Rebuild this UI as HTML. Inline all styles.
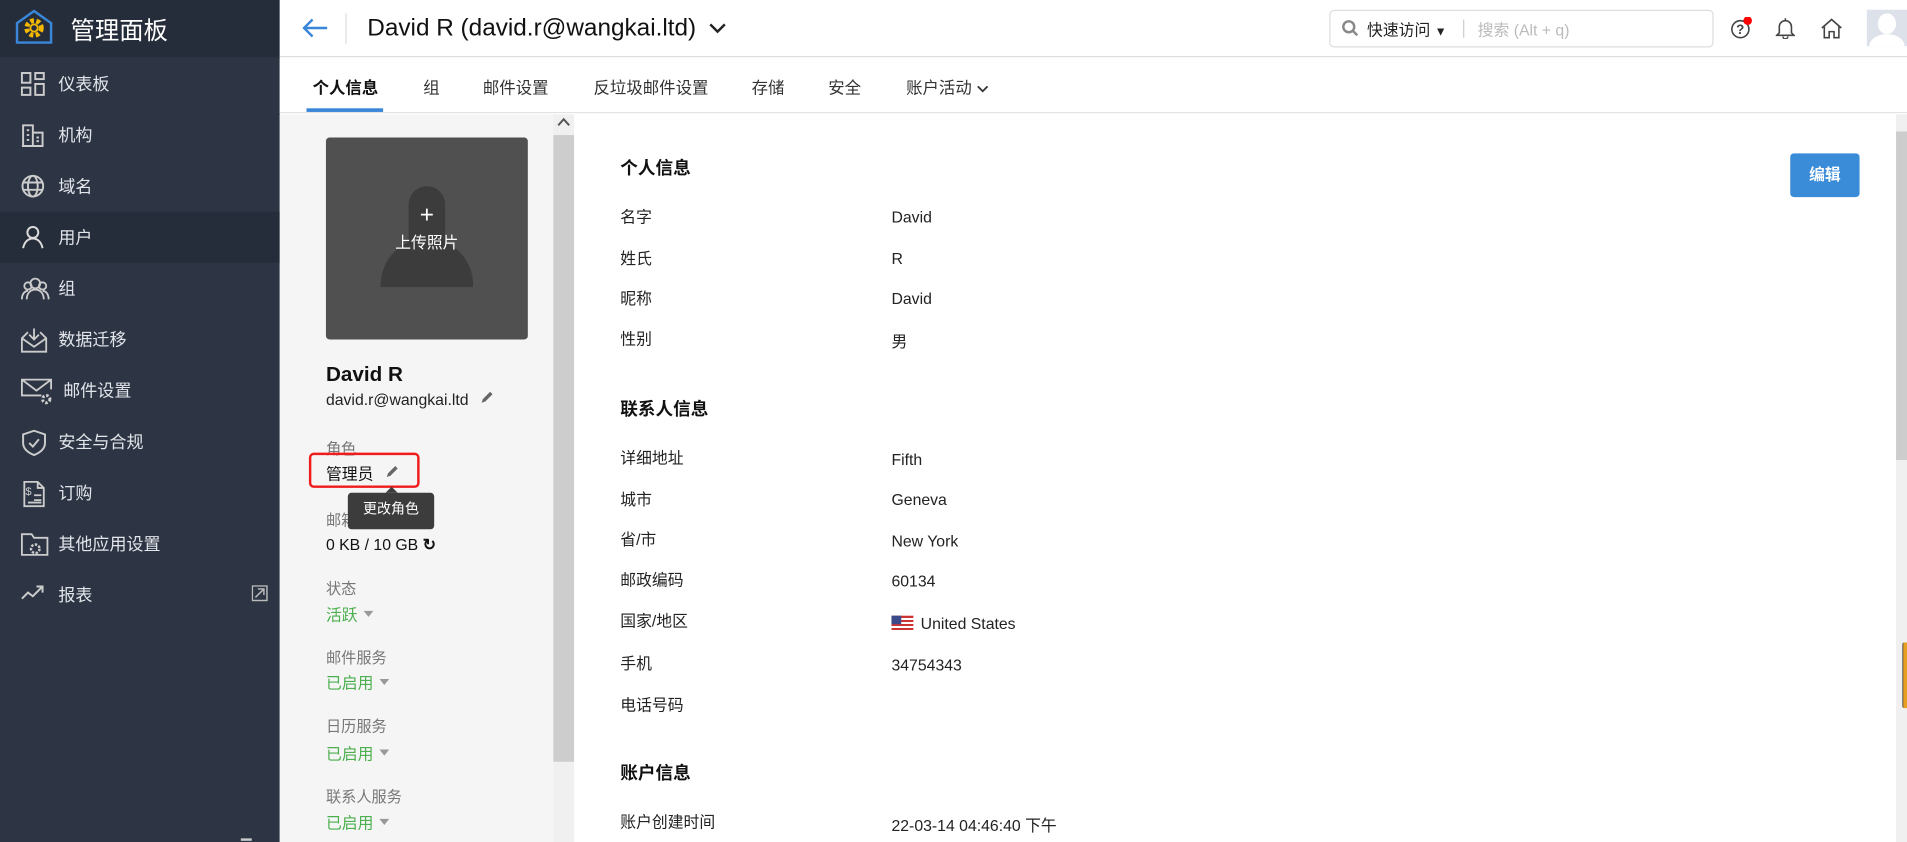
<!DOCTYPE html>
<html><head><meta charset="utf-8"><style>
*{box-sizing:border-box;margin:0;padding:0}
html,body{width:1907px;height:842px;overflow:hidden;background:#fff}
#w{width:1568px;height:692px;transform:scale(1.2162,1.2168);transform-origin:0 0;position:relative;font-family:"Liberation Sans","Noto Sans CJK SC",sans-serif;color:#222}
.abs{position:absolute}
#side{left:0;top:0;width:230px;height:692px;background:#2d3544}
#logo{left:0;top:0;width:230px;height:47px;background:#262d3a}
.nav{position:absolute;left:0;width:230px;height:42px;color:#e2e5ea;font-size:14px;line-height:42px;padding-left:48px}
.nav svg{position:absolute;left:17px;top:11px}
.nav.act{background:#262d3a}
#top{left:230px;top:0;width:1338px;height:47px;border-bottom:1px solid #ddd;background:#fff}
#tabs{left:230px;top:48px;width:1338px;height:45px;border-bottom:1px solid #e3e3e3;background:#fff}
.tab{position:absolute;top:13px;font-size:13.5px;color:#333}
#lp{left:230px;top:94px;width:242px;height:598px;background:#f5f5f5}
.lbl{position:absolute;left:268px;font-size:12.5px;color:#777}
.grn{position:absolute;left:268px;font-size:13px;color:#4caf50}
.grn i{display:inline-block;border:4px solid transparent;border-top:5px solid #999;margin-left:5px;vertical-align:-1px}
.rk{position:absolute;left:510px;font-size:13px;color:#222;margin-top:-2px}
.rv{position:absolute;left:733px;font-size:13px;color:#222}
.h{position:absolute;left:510px;font-size:14.5px;font-weight:bold;color:#111}
</style></head><body><div id="w">
<div id="side" class="abs"></div>
<div id="logo" class="abs">
<svg class="abs" style="left:12px;top:7px" width="32" height="30" viewBox="0 0 32 30"><path d="M2 12 L16 2 L30 12 V28 H2 Z" fill="none" stroke="#3a86d8" stroke-width="2"/><circle cx="16" cy="16" r="6" fill="none" stroke="#f5b800" stroke-width="4" stroke-dasharray="3 2"/><circle cx="16" cy="16" r="3" fill="#262d3a" stroke="#f5b800" stroke-width="1.5"/></svg>
<div class="abs" style="left:58px;top:9px;font-size:20px;color:#fff">管理面板</div></div>
<div class="nav" style="top:48px"><svg width="20" height="20" fill="none" stroke="#ccc" stroke-width="1.6"><rect x="1" y="1" width="7" height="8"/><rect x="12" y="1" width="7" height="5"/><rect x="1" y="13" width="7" height="6"/><rect x="12" y="10" width="7" height="9"/></svg>仪表板</div>
<div class="nav" style="top:90px"><svg width="20" height="20" fill="none" stroke="#ccc" stroke-width="1.6"><path d="M2 19V2h8v17M10 8h8v11H1M5 6h2M5 10h2M5 14h2M13 12h2M13 15h2"/></svg>机构</div>
<div class="nav" style="top:132px"><svg width="20" height="20" fill="none" stroke="#ccc" stroke-width="1.6"><circle cx="10" cy="10" r="8.5"/><ellipse cx="10" cy="10" rx="4" ry="8.5"/><path d="M2 7h16M2 13h16"/></svg>域名</div>
<div class="nav act" style="top:174px"><svg width="20" height="20" fill="none" stroke="#ddd" stroke-width="1.6"><circle cx="10" cy="6" r="4.5"/><path d="M2 19c1-5 4-8 8-8s7 3 8 8"/></svg>用户</div>
<div class="nav" style="top:216px"><svg width="24" height="20" fill="none" stroke="#ccc" stroke-width="1.5"><circle cx="12" cy="6" r="4"/><circle cx="6" cy="8" r="3"/><circle cx="18" cy="8" r="3"/><path d="M1 19c0-5 3-7 5-7M23 19c0-5-3-7-5-7M5 19c0-5 3-8 7-8s7 3 7 8"/></svg>组</div>
<div class="nav" style="top:258px"><svg width="22" height="22" fill="none" stroke="#ccc" stroke-width="1.5"><path d="M11 1v9M7 6l4 4 4-4M6 4L1 9v11h20V9l-5-5M1 9l10 7 10-7"/></svg>数据迁移</div>
<div class="nav" style="top:300px;padding-left:52px"><svg width="26" height="22" fill="none" stroke="#ccc" stroke-width="1.5"><path d="M17 14H1V1h24v8M1 1l12 9 12-9"/><circle cx="21" cy="17" r="3" stroke-width="2.5" stroke-dasharray="2 1.5"/></svg>邮件设置</div>
<div class="nav" style="top:342px"><svg width="22" height="22" fill="none" stroke="#ccc" stroke-width="1.6"><path d="M11 1l9 3v7c0 5-4 8-9 10-5-2-9-5-9-10V4z"/><path d="M7 11l3 3 5-6"/></svg>安全与合规</div>
<div class="nav" style="top:384px"><svg width="22" height="22" fill="none" stroke="#ccc" stroke-width="1.5"><path d="M3 1h11l5 5v15H3zM14 1v5h5M11 12h6M11 16h6M6 18h11"/><text x="4" y="12" font-size="9" fill="#ccc" stroke="none">$</text></svg>订购</div>
<div class="nav" style="top:426px"><svg width="24" height="22" fill="none" stroke="#ccc" stroke-width="1.5"><path d="M1 19V2h8l2 3h11v14z"/><circle cx="12" cy="14" r="3.5" stroke-dasharray="2 1.2" stroke-width="2"/></svg>其他应用设置</div>
<div class="nav" style="top:468px"><svg width="24" height="18" fill="none" stroke="#ccc" stroke-width="1.6"><path d="M1 13l5-5 4 3 8-8M13 3h5v5"/></svg>报表<svg style="left:207px;top:13px" width="14" height="14" fill="none" stroke="#bbb" stroke-width="1.2"><rect x=".5" y=".5" width="12" height="12"/><path d="M3 10l7-7M5 3h5v5"/></svg></div>
<div id="top" class="abs">
<svg class="abs" style="left:18px;top:14px" width="22" height="18" fill="none" stroke="#3a86d8" stroke-width="2"><path d="M21 9H2M9 2L2 9l7 7"/></svg>
<div class="abs" style="left:54px;top:11px;width:1px;height:25px;background:#ddd"></div>
<div class="abs" style="left:72px;top:12px;font-size:20px;color:#111">David R (david.r@wangkai.ltd) <svg width="16" height="12" style="margin-left:4px" fill="none" stroke="#222" stroke-width="2"><path d="M2 3l6 6 6-6"/></svg></div>
<div class="abs" style="left:863px;top:8px;width:316px;height:31px;border:1px solid #ddd;border-radius:4px"><svg class="abs" style="left:9px;top:7px" width="14" height="14" fill="none" stroke="#888" stroke-width="2"><circle cx="6" cy="6" r="4.5"/><path d="M9.5 9.5L13 13"/></svg><div class="abs" style="left:30px;top:5px;font-size:13px;color:#222">快速访问 <span style="font-size:10px">▼</span></div><div class="abs" style="left:109px;top:7px;width:1px;height:15px;background:#ccc"></div><div class="abs" style="left:121px;top:5px;font-size:13px;color:#bbb">搜索 (Alt + q)</div></div>
<svg class="abs" style="left:1192px;top:14px" width="20" height="20" fill="none" stroke="#444" stroke-width="1.3"><circle cx="9" cy="10" r="7"/><text x="5.5" y="14" font-size="11" font-weight="bold" fill="#444" stroke="none">?</text><circle cx="15" cy="3" r="3.5" fill="red" stroke="none"/></svg>
<svg class="abs" style="left:1230px;top:14px" width="16" height="18" fill="none" stroke="#444" stroke-width="1.3"><path d="M3 13V8a5 5 0 0 1 10 0v5l2 2H1zM6 16a2 2 0 0 0 4 0M8 1v2"/></svg>
<svg class="abs" style="left:1267px;top:14px" width="18" height="18" fill="none" stroke="#444" stroke-width="1.3"><path d="M1 9l8-7 8 7M3 7v10h4v-5h4v5h4V7"/></svg>
<div class="abs" style="left:1305px;top:8px;width:33px;height:30px;background:#dde1ea;overflow:hidden"><div class="abs" style="left:9px;top:3px;width:15px;height:17px;border-radius:50%;background:#fff"></div><div class="abs" style="left:2px;top:20px;width:29px;height:20px;border-radius:50% 50% 0 0;background:#fff"></div></div>
</div>
<div id="tabs" class="abs">
<div class="tab" style="left:27px;font-weight:bold;color:#111">个人信息</div><div class="abs" style="left:22px;top:41px;width:63px;height:3px;background:#3a86d8"></div>
<div class="tab" style="left:118px">组</div><div class="tab" style="left:167px">邮件设置</div><div class="tab" style="left:258px">反垃圾邮件设置</div><div class="tab" style="left:388px">存储</div><div class="tab" style="left:451px">安全</div><div class="tab" style="left:515px">账户活动 <svg width="10" height="8" fill="none" stroke="#333" stroke-width="1.5"><path d="M1 2l4 4 4-4"/></svg></div>
</div>
<div id="lp" class="abs"></div>
<div class="abs" style="left:455px;top:94px;width:17px;height:598px;background:#f0f0f0"></div>
<div class="abs" style="left:455px;top:111px;width:17px;height:515px;background:#cdcdcd"></div>
<svg class="abs" style="left:458px;top:96px" width="11" height="8" fill="none" stroke="#555" stroke-width="1.6"><path d="M1 7l4.5-5 4.5 5"/></svg>
<div class="abs" style="left:268px;top:113px;width:166px;height:166px;background:#505050;border-radius:3px;overflow:hidden">
<div class="abs" style="left:68px;top:40px;width:30px;height:65px;border-radius:15px;background:#3c3c3c"></div>
<div class="abs" style="left:45px;top:83px;width:76px;height:40px;border-radius:38px 38px 0 0;background:#3c3c3c"></div>
<div class="abs" style="left:0;top:54px;width:166px;text-align:center;color:#fff;font-size:20px;line-height:20px">+</div>
<div class="abs" style="left:0;top:76px;width:166px;text-align:center;color:#fff;font-size:13px">上传照片</div></div>
<div class="abs" style="left:268px;top:298px;font-size:17px;font-weight:bold;color:#111">David R</div>
<div class="abs" style="left:268px;top:321px;font-size:13px;color:#222">david.r@wangkai.ltd <svg width="12" height="12" style="margin-left:5px"><path d="M2 10l1-3 6-6 2 2-6 6z" fill="#666"/></svg></div>
<div class="lbl" style="top:358px">角色</div>
<div class="abs" style="left:268px;top:379px;font-size:13px;color:#111">管理员 <svg width="12" height="12" style="margin-left:5px"><path d="M2 10l1-3 6-6 2 2-6 6z" fill="#666"/></svg></div>
<div class="abs" style="left:254px;top:372px;width:91px;height:29px;border:2px solid #f01c1c;border-radius:4px"></div>
<div class="lbl" style="top:417px">邮箱</div>
<div class="abs" style="left:286px;top:405px;width:71px;height:30px;background:#3c3c3c;border-radius:3px;color:#fff;font-size:11.5px;text-align:center;line-height:28px">更改角色</div>
<div class="abs" style="left:317px;top:400px;border:5px solid transparent;border-bottom-color:#3c3c3c;border-top:0"></div>
<div class="abs" style="left:268px;top:440px;font-size:13px;color:#111">0 KB / 10 GB <span style="font-weight:bold">↻</span></div>
<div class="lbl" style="top:473px">状态</div><div class="grn" style="top:495px">活跃<i></i></div>
<div class="lbl" style="top:530px">邮件服务</div><div class="grn" style="top:551px">已启用<i></i></div>
<div class="lbl" style="top:586px">日历服务</div><div class="grn" style="top:609px">已启用<i></i></div>
<div class="lbl" style="top:644px">联系人服务</div><div class="grn" style="top:666px">已启用<i></i></div>
<div class="abs" style="left:198px;top:689px;width:9px;height:2px;background:#ccc"></div>
<div class="h" style="top:127px">个人信息</div>
<div class="abs" style="left:1472px;top:126px;width:57px;height:36px;background:#3a8cd8;border-radius:3px;color:#fff;font-size:13px;font-weight:bold;text-align:center;line-height:36px">编辑</div>
<div class="rk" style="top:170px">名字</div><div class="rv" style="top:171px">David</div>
<div class="rk" style="top:204px">姓氏</div><div class="rv" style="top:205px">R</div>
<div class="rk" style="top:237px">昵称</div><div class="rv" style="top:238px">David</div>
<div class="rk" style="top:270px">性别</div><div class="rv" style="top:270px">男</div>
<div class="h" style="top:325px">联系人信息</div>
<div class="rk" style="top:368px">详细地址</div><div class="rv" style="top:370px">Fifth</div>
<div class="rk" style="top:402px">城市</div><div class="rv" style="top:403px">Geneva</div>
<div class="rk" style="top:435px">省/市</div><div class="rv" style="top:437px">New York</div>
<div class="rk" style="top:468px">邮政编码</div><div class="rv" style="top:470px">60134</div>
<div class="rk" style="top:502px">国家/地区</div><div class="rv" style="top:505px"><span style="display:inline-block;width:18px;height:12px;vertical-align:-1px;margin-right:6px;background:repeating-linear-gradient(#c33 0 1.7px,#fff 1.7px 3.4px);position:relative"><span style="position:absolute;left:0;top:0;width:8px;height:7px;background:#3c4a8a"></span></span>United States</div>
<div class="rk" style="top:537px">手机</div><div class="rv" style="top:539px">34754343</div>
<div class="rk" style="top:571px">电话号码</div>
<div class="h" style="top:624px">账户信息</div>
<div class="rk" style="top:667px">账户创建时间</div><div class="rv" style="top:668px">22-03-14 04:46:40 下午</div>
<div class="abs" style="left:1559px;top:94px;width:9px;height:598px;background:#f0f0f0"></div>
<div class="abs" style="left:1559px;top:108px;width:9px;height:270px;background:#cdcdcd"></div>
<div class="abs" style="left:1564px;top:528px;width:4px;height:54px;background:#e8a020;border-radius:2px 0 0 2px;border-left:1px solid #555"></div>
</div></body></html>
